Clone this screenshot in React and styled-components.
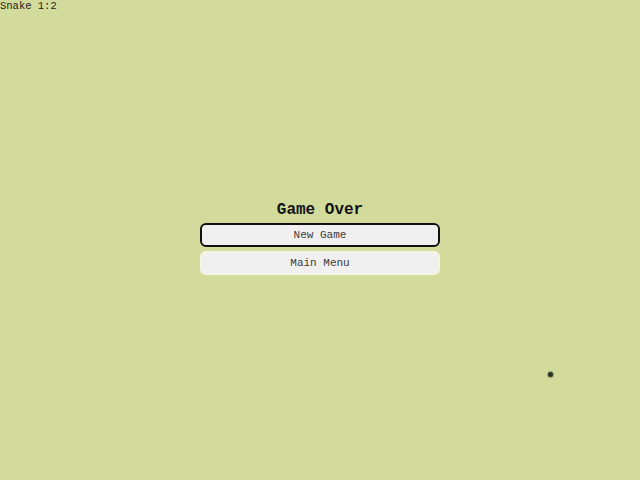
import React from 'react'
import styled, {createGlobalStyle} from 'styled-components'

const Global = createGlobalStyle`
html, body {
  margin: 0;
  padding: 0;
  background: #d2db9b;
}
body {
  font-family: "Liberation Mono", "Courier New", monospace;
}
`

const Screen = styled.div`
position: relative;
width: 640px;
height: 480px;
overflow: hidden;
display: flex;
align-items: center;
justify-content: center;
`

const Score = styled.div`
position: absolute;
left: 0;
top: 0;
font-size: 10.5px;
line-height: 12px;
color: #222;
`

const Menu = styled.div`
width: 240px;
display: flex;
flex-direction: column;
align-items: stretch;
gap: 4px;
padding-bottom: 4px;
`

const Title = styled.h1`
margin: 0;
font-size: 16px;
line-height: 18px;
font-weight: bold;
text-align: center;
color: #111;
`

const Button = styled.button`
height: 24px;
border-radius: 6px;
border: 2px solid ${props => props.active ? '#111' : '#f4f6e4'};
background: #f0f0f0;
font-family: "Liberation Mono", "Courier New", monospace;
font-size: 11px;
color: #3a3a3a;
padding: 0;
`

const Food = styled.div`
position: absolute;
left: 548px;
top: 372px;
width: 5px;
height: 5px;
border-radius: 50%;
background: #2a3220;
box-shadow: 0 0 0 1px rgba(40, 50, 30, 0.3);
`

function App()
{
    return (
        <Screen>
            <Global />
            <Score>Snake 1:2</Score>
            <Menu>
                <Title>Game Over</Title>
                <Button active>New Game</Button>
                <Button>Main Menu</Button>
            </Menu>
            <Food />
        </Screen>
    )
}

export default App
